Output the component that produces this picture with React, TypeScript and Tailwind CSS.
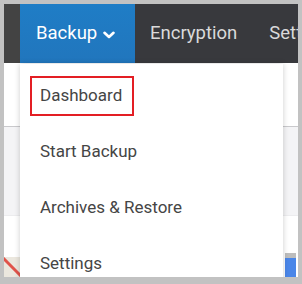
import { FC } from "react";

const items = ["Dashboard", "Start Backup", "Archives & Restore", "Settings"];

const Chevron: FC = () => (
  <svg width="12" height="8" viewBox="0 0 12 8" className="ml-[6px] mt-[2px] shrink-0">
    <path d="M1.5 1.8 L6 6 L10.5 1.8" fill="none" stroke="#fff" strokeWidth="2.6" strokeLinecap="round" strokeLinejoin="round" />
  </svg>
);

const App: FC = () => {
  return (
    <div
      className="w-[302px] h-[284px] bg-[#c2c2c2] pt-[4px] px-[4px] pb-[7px]"
      style={{ fontFamily: "Roboto, 'Liberation Sans', sans-serif" }}
    >
      <div className="relative h-full overflow-hidden bg-white flex flex-col">
        {/* top nav */}
        <div className="h-[59px] shrink-0 flex bg-[#38393d] text-[18.5px] font-normal overflow-hidden">
          <div className="w-[16px] shrink-0 bg-[#434343]" />
          <div className="w-[115px] shrink-0 flex items-center pl-[16px] bg-gradient-to-b from-[#1f7dc6] to-[#2176bd] text-white">
            Backup
            <Chevron />
          </div>
          <div className="shrink-0 flex items-center px-[15px] text-[#dadada] whitespace-nowrap">Encryption</div>
          <div className="shrink-0 flex items-center px-[17px] text-[#dadada] whitespace-nowrap">Settings</div>
        </div>

        {/* page behind the menu */}
        <div className="flex-1 flex flex-col">
          <div className="h-[64px] border-b border-[#c9c9cc] bg-white" />
          <div className="h-[89px] bg-[#f4f4f6] border-b border-[#ececee]" />
          <div className="flex-1 flex items-end justify-between">
            <div className="w-[16px] h-[20px] bg-[#ebe7de] overflow-hidden">
              <svg width="16" height="20" viewBox="0 0 16 20">
                <path d="M-2 0 L18 20" stroke="#e0534a" strokeWidth="3" />
              </svg>
            </div>
            <div className="mr-[2px] w-[11px] h-[24px] flex flex-col">
              <div className="h-[5px] bg-[#bdbdbd]" />
              <div className="flex-1 bg-[#4a86e8]" />
            </div>
          </div>
        </div>

        {/* dropdown menu */}
        <div className="absolute left-[16px] top-[60px] w-[263px] h-[240px] bg-white shadow-[0_0_6px_rgba(0,0,0,0.2)] pt-[4px]">
          {items.map((item, i) => (
            <div key={item} className="h-[56px] flex items-center px-[10px]">
              <span
                className={`h-[40px] flex items-center pl-[8px] pr-[10px] border-2 text-[17px] text-[#454545] ${
                  i === 0 ? "border-[#e31e24]" : "border-transparent"
                }`}
              >
                {item}
              </span>
            </div>
          ))}
        </div>
      </div>
    </div>
  );
};

export default App;
